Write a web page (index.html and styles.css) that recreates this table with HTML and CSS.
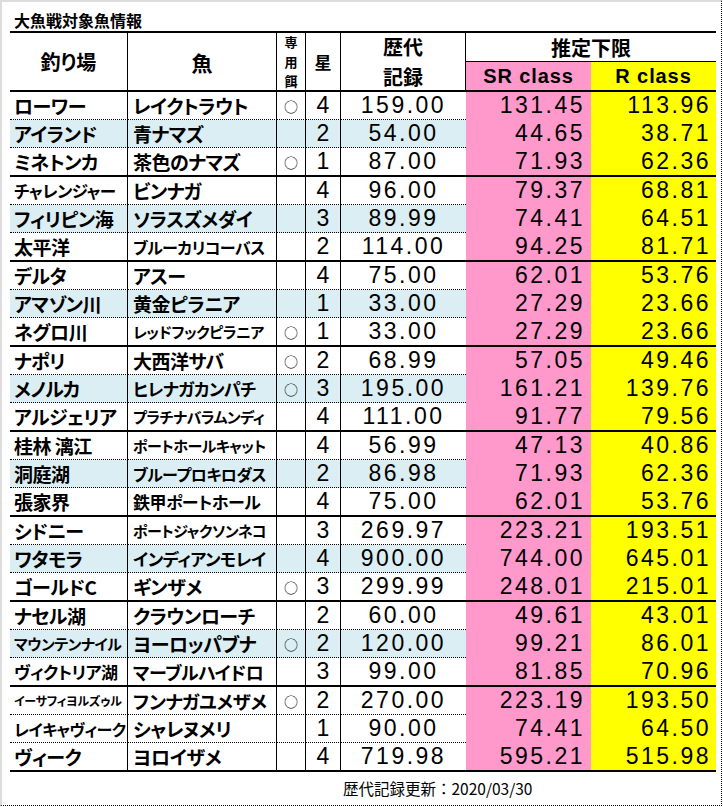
FILE: index.html
```html
<!DOCTYPE html>
<html lang="ja">
<head>
<meta charset="utf-8">
<title>大魚戦対象魚情報</title>
<link rel="stylesheet" href="styles.css">
</head>
<body>
<div class="page">
  <div class="title">大魚戦対象魚情報</div>
  <div class="tbl">
    <div class="h h-place">釣り場</div>
    <div class="h h-fish">魚</div>
    <div class="h h-bait"><span>専</span><span>用</span><span>餌</span></div>
    <div class="h h-star">星</div>
    <div class="h h-rec"><span>歴代</span><span>記録</span></div>
    <div class="h h-est">推定下限</div>
    <div class="h h-sr">SR class</div>
    <div class="h h-r">R class</div>

    <div class="r"><div class="pl">ローワー</div><div class="fi">レイクトラウト</div><div class="bt">○</div><div class="st">4</div><div class="rec">159.00</div><div class="sr">131.45</div><div class="rc">113.96</div></div>
    <div class="r blue"><div class="pl">アイランド</div><div class="fi">青ナマズ</div><div class="bt"></div><div class="st">2</div><div class="rec">54.00</div><div class="sr">44.65</div><div class="rc">38.71</div></div>
    <div class="r end"><div class="pl">ミネトンカ</div><div class="fi">茶色のナマズ</div><div class="bt">○</div><div class="st">1</div><div class="rec">87.00</div><div class="sr">71.93</div><div class="rc">62.36</div></div>

    <div class="r"><div class="pl f165">チャレンジャー</div><div class="fi">ビンナガ</div><div class="bt"></div><div class="st">4</div><div class="rec">96.00</div><div class="sr">79.37</div><div class="rc">68.81</div></div>
    <div class="r blue"><div class="pl">フィリピン海</div><div class="fi">ソラスズメダイ</div><div class="bt"></div><div class="st">3</div><div class="rec">89.99</div><div class="sr">74.41</div><div class="rc">64.51</div></div>
    <div class="r end"><div class="pl">太平洋</div><div class="fi f16">ブルーカリコーバス</div><div class="bt"></div><div class="st">2</div><div class="rec">114.00</div><div class="sr">94.25</div><div class="rc">81.71</div></div>

    <div class="r"><div class="pl">デルタ</div><div class="fi">アスー</div><div class="bt"></div><div class="st">4</div><div class="rec">75.00</div><div class="sr">62.01</div><div class="rc">53.76</div></div>
    <div class="r blue"><div class="pl">アマゾン川</div><div class="fi">黄金ピラニア</div><div class="bt"></div><div class="st">1</div><div class="rec">33.00</div><div class="sr">27.29</div><div class="rc">23.66</div></div>
    <div class="r end"><div class="pl">ネグロ川</div><div class="fi f15">レッドフックピラニア</div><div class="bt">○</div><div class="st">1</div><div class="rec">33.00</div><div class="sr">27.29</div><div class="rc">23.66</div></div>

    <div class="r"><div class="pl">ナポリ</div><div class="fi">大西洋サバ</div><div class="bt">○</div><div class="st">2</div><div class="rec">68.99</div><div class="sr">57.05</div><div class="rc">49.46</div></div>
    <div class="r blue"><div class="pl">メノルカ</div><div class="fi f17">ヒレナガカンパチ</div><div class="bt">○</div><div class="st">3</div><div class="rec">195.00</div><div class="sr">161.21</div><div class="rc">139.76</div></div>
    <div class="r end"><div class="pl">アルジェリア</div><div class="fi f15">プラチナバラムンディ</div><div class="bt"></div><div class="st">4</div><div class="rec">111.00</div><div class="sr">91.77</div><div class="rc">79.56</div></div>

    <div class="r"><div class="pl">桂林 漓江</div><div class="fi f15">ポートホールキャット</div><div class="bt"></div><div class="st">4</div><div class="rec">56.99</div><div class="sr">47.13</div><div class="rc">40.86</div></div>
    <div class="r blue"><div class="pl">洞庭湖</div><div class="fi f16">ブループロキロダス</div><div class="bt"></div><div class="st">2</div><div class="rec">86.98</div><div class="sr">71.93</div><div class="rc">62.36</div></div>
    <div class="r end"><div class="pl">張家界</div><div class="fi f17">鉄甲ポートホール</div><div class="bt"></div><div class="st">4</div><div class="rec">75.00</div><div class="sr">62.01</div><div class="rc">53.76</div></div>

    <div class="r"><div class="pl">シドニー</div><div class="fi f15">ポートジャクソンネコ</div><div class="bt"></div><div class="st">3</div><div class="rec">269.97</div><div class="sr">223.21</div><div class="rc">193.51</div></div>
    <div class="r blue"><div class="pl">ワタモラ</div><div class="fi f17">インディアンモレイ</div><div class="bt"></div><div class="st">4</div><div class="rec">900.00</div><div class="sr">744.00</div><div class="rc">645.01</div></div>
    <div class="r end"><div class="pl">ゴールドC</div><div class="fi">ギンザメ</div><div class="bt">○</div><div class="st">3</div><div class="rec">299.99</div><div class="sr">248.01</div><div class="rc">215.01</div></div>

    <div class="r"><div class="pl">ナセル湖</div><div class="fi">クラウンローチ</div><div class="bt"></div><div class="st">2</div><div class="rec">60.00</div><div class="sr">49.61</div><div class="rc">43.01</div></div>
    <div class="r blue"><div class="pl f15">マウンテンナイル</div><div class="fi">ヨーロッパブナ</div><div class="bt">○</div><div class="st">2</div><div class="rec">120.00</div><div class="sr">99.21</div><div class="rc">86.01</div></div>
    <div class="r end"><div class="pl f17">ヴィクトリア湖</div><div class="fi f18">マーブルハイドロ</div><div class="bt"></div><div class="st">3</div><div class="rec">99.00</div><div class="sr">81.85</div><div class="rc">70.96</div></div>

    <div class="r"><div class="pl f12">イーサフィヨルズゥル</div><div class="fi f185">フンナガユメザメ</div><div class="bt">○</div><div class="st">2</div><div class="rec">270.00</div><div class="sr">223.19</div><div class="rc">193.50</div></div>
    <div class="r"><div class="pl f16">レイキャヴィーク</div><div class="fi">シャレヌメリ</div><div class="bt"></div><div class="st">1</div><div class="rec">90.00</div><div class="sr">74.41</div><div class="rc">64.50</div></div>
    <div class="r end"><div class="pl">ヴィーク</div><div class="fi">ヨロイザメ</div><div class="bt"></div><div class="st">4</div><div class="rec">719.98</div><div class="sr">595.21</div><div class="rc">515.98</div></div>
  </div>
  <div class="note">歴代記録更新：2020/03/30</div>
</div>
</body>
</html>
```
FILE: styles.css
```css
html, body {
  margin: 0;
  padding: 0;
  background: #fff;
}
.page {
  box-sizing: border-box;
  width: 722px;
  height: 806px;
  border-top: 2px solid #dcdcdc;
  border-left: 2px solid #dcdcdc;
  border-right: 1px dotted #000;
  border-bottom: 1px dotted #000;
  padding-left: 8px;
  font-family: "Noto Sans CJK JP", sans-serif;
  color: #000;
}
.title {
  height: 29px;
  display: flex;
  align-items: flex-end;
  padding-left: 4px;
  font-size: 16px;
  font-weight: 700;
  line-height: 22px;
}
.tbl {
  width: 706px;
  display: grid;
  grid-template-columns: 118px 149px 29px 35px 125px 125px 125px;
  grid-template-rows: 29px 30px;
  grid-auto-rows: auto;
  border-top: 2px solid #000;
}
.h {
  box-sizing: border-box;
  display: flex;
  align-items: center;
  justify-content: center;
  font-weight: 700;
  font-size: 20px;
  font-feature-settings: "palt";
  background: #fff;
}
.h-place, .h-fish, .h-bait, .h-star, .h-rec {
  grid-row: 1 / span 2;
  border-right: 1px solid #000;
  border-bottom: 2px solid #000;
}
.h-place { grid-column: 1; }
.h-fish { grid-column: 2; font-size: 21px; }
.h-bait {
  grid-column: 3;
  flex-direction: column;
  font-size: 13px;
  line-height: 19.5px;
}
.h-star { grid-column: 4; font-size: 17px; }
.h-rec {
  grid-column: 5;
  flex-direction: column;
  line-height: 30px;
}
.h-est {
  grid-column: 6 / span 2;
  grid-row: 1;
  border-bottom: 1px solid #000;
}
.h-sr, .h-r {
  grid-row: 2;
  border-bottom: 2px solid #000;
  font-family: "Liberation Sans", Arial, sans-serif;
  font-size: 20px;
  letter-spacing: 0.9px;
}
.h-sr { grid-column: 6; background: #ff99cc; }
.h-r { grid-column: 7; background: #ffff00; }

.r { display: contents; }
.r > div {
  box-sizing: border-box;
  height: 28px;
  border-bottom: 1px dotted #000;
  display: flex;
  align-items: center;
  white-space: nowrap;
  overflow: hidden;
  background: #fff;
}
.r.end > div {
  height: 29px;
  border-bottom: 2px solid #000;
}
.r.blue > div { background: #daeef3; }
.r > .pl, .r > .fi, .r > .bt, .r > .st { border-right: 1px solid #000; }

.pl, .fi {
  font-weight: 700;
  font-size: 19px;
  letter-spacing: -0.5px;
  font-feature-settings: "palt";
}
.pl { padding-left: 4px; }
.fi { padding-left: 5px; }
.f185 { font-size: 18.5px; }
.f18 { font-size: 18px; }
.f17 { font-size: 17px; }
.f165 { font-size: 16.5px; }
.f16 { font-size: 16px; }
.f15 { font-size: 15px; }
.f12 { font-size: 12px; letter-spacing: -0.3px; }

.bt {
  justify-content: center;
  font-size: 14px;
}
.st, .rec, .sr, .rc {
  font-family: "Liberation Sans", Arial, sans-serif;
  font-size: 23px;
  letter-spacing: 2.5px;
}
.st, .rec { justify-content: center; }
.st { letter-spacing: 0; }
.sr, .rc { justify-content: flex-end; }
.r > .sr { background: #ff99cc; padding-right: 6px; }
.r > .rc { background: #ffff00; padding-right: 5px; }
.r > .sr, .r > .rc { border-bottom-color: transparent; }
.r.end > .sr, .r.end > .rc { border-bottom-color: #000; }
.r.blue > .sr { background: #ff99cc; }
.r.blue > .rc { background: #ffff00; }

.note {
  height: 32px;
  line-height: 32px;
  padding-left: 333px;
  font-size: 15.5px;
}
```
